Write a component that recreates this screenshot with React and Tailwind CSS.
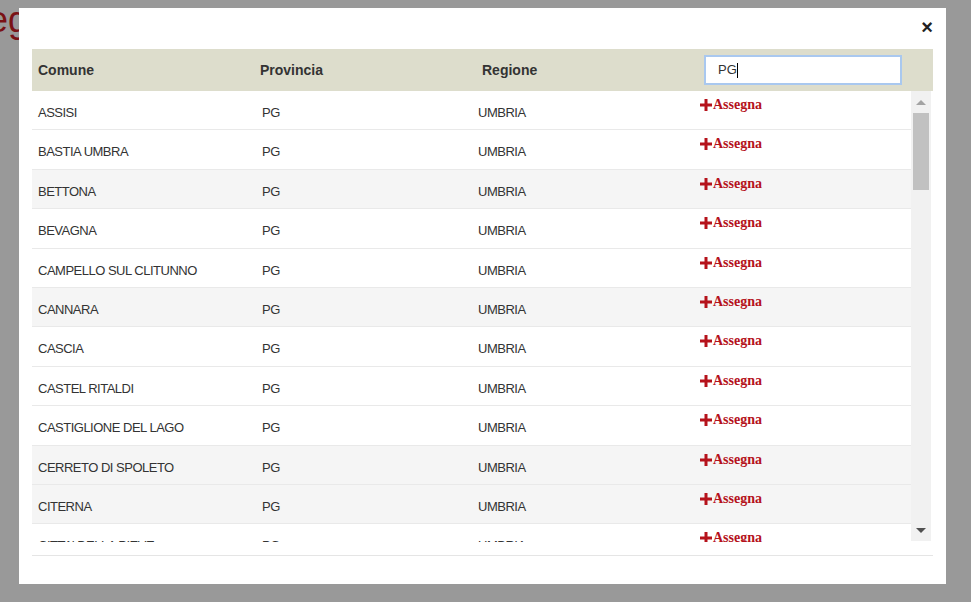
import React from 'react';

const comuni = [
  'ASSISI',
  'BASTIA UMBRA',
  'BETTONA',
  'BEVAGNA',
  'CAMPELLO SUL CLITUNNO',
  'CANNARA',
  'CASCIA',
  'CASTEL RITALDI',
  'CASTIGLIONE DEL LAGO',
  'CERRETO DI SPOLETO',
  'CITERNA',
  "CITTA' DELLA PIEVE",
];

// rows that show the grey stripe in the picture
const striped = [2, 5, 9, 10];

const PlusIcon = () => (
  <svg width="12" height="12" viewBox="0 0 12 12" className="shrink-0 mr-[1px]">
    <rect x="4.5" y="0" width="3" height="12" fill="#b5121b" />
    <rect x="0" y="4.5" width="12" height="3" fill="#b5121b" />
  </svg>
);

const Row = ({ name, idx }) => (
  <div
    className={`flex h-[39.4px] shrink-0 border-b border-[#e9e9e9] ${striped.includes(idx) ? 'bg-[#f5f5f5]' : 'bg-white'}`}
  >
    <div className="w-[224px] pl-[6px] pt-[14px] leading-[15px] whitespace-nowrap">{name}</div>
    <div className="w-[216px] pl-[6px] pt-[14px] leading-[15px]">PG</div>
    <div className="w-[222px] pl-[6px] pt-[14px] leading-[15px]">UMBRIA</div>
    <div className="flex-1 pl-[6px] pt-[5px]">
      <a className="flex items-center text-[#b5121b] font-bold text-[14px] tracking-normal leading-[18px] font-['Liberation_Serif',serif] cursor-pointer">
        <PlusIcon />
        Assegna
      </a>
    </div>
  </div>
);

const App = () => {
  return (
    <div className="relative w-[971px] h-[602px] bg-[#999999] overflow-hidden font-['Liberation_Sans',Arial,sans-serif] text-[#333333]">
      {/* page heading behind the backdrop */}
      <div className="absolute left-[-38px] top-[-2px] text-[36px] leading-[44px] text-[#7a1215]">Reg</div>

      {/* Modal */}
      <div className="absolute left-[19px] top-[8px] w-[927px] h-[576px] bg-white px-[13px] pt-[41px]">
        <button className="absolute right-[13px] top-[9px] text-[20px] font-bold leading-[20px] text-[#222]">×</button>

        {/* Header */}
        <div className="flex h-[42px] items-center bg-[#ddddcc] text-[14px] font-bold">
          <div className="w-[222px] pl-[6px]">Comune</div>
          <div className="w-[222px] pl-[6px]">Provincia</div>
          <div className="w-[222px] pl-[6px]">Regione</div>
          <div className="flex-1 pl-[6px]">
            <div className="w-[198px] h-[30px] border-2 border-[#a9c8ef] bg-white flex items-center pl-[12px] text-[13px] font-normal text-[#333]">
              <div className="flex items-center">
                PG<span className="w-[1.5px] h-[15px] bg-black"></span>
              </div>
            </div>
          </div>
        </div>

        {/* Body */}
        <div className="flex h-[451px]">
          <div className="w-[879px] overflow-hidden flex flex-col text-[13px] tracking-[-0.5px]">
            {comuni.map((c, i) => (
              <Row key={c} name={c} idx={i} />
            ))}
          </div>
          {/* scrollbar */}
          <div className="w-[20px] h-[450px] bg-[#f1f1f1] flex flex-col items-center">
            <div className="h-[22px] flex items-center justify-center">
              <div className="w-0 h-0 border-l-[5px] border-r-[5px] border-b-[5px] border-l-transparent border-r-transparent border-b-[#a3a3a3]"></div>
            </div>
            <div className="w-[16px] h-[77px] bg-[#c1c1c1]"></div>
            <div className="flex-1"></div>
            <div className="h-[22px] flex items-center justify-center">
              <div className="w-0 h-0 border-l-[5px] border-r-[5px] border-t-[5px] border-l-transparent border-r-transparent border-t-[#505050]"></div>
            </div>
          </div>
        </div>
        <div className="mt-[13px] border-t border-[#e5e5e5]"></div>
      </div>
    </div>
  );
};

export default App;
